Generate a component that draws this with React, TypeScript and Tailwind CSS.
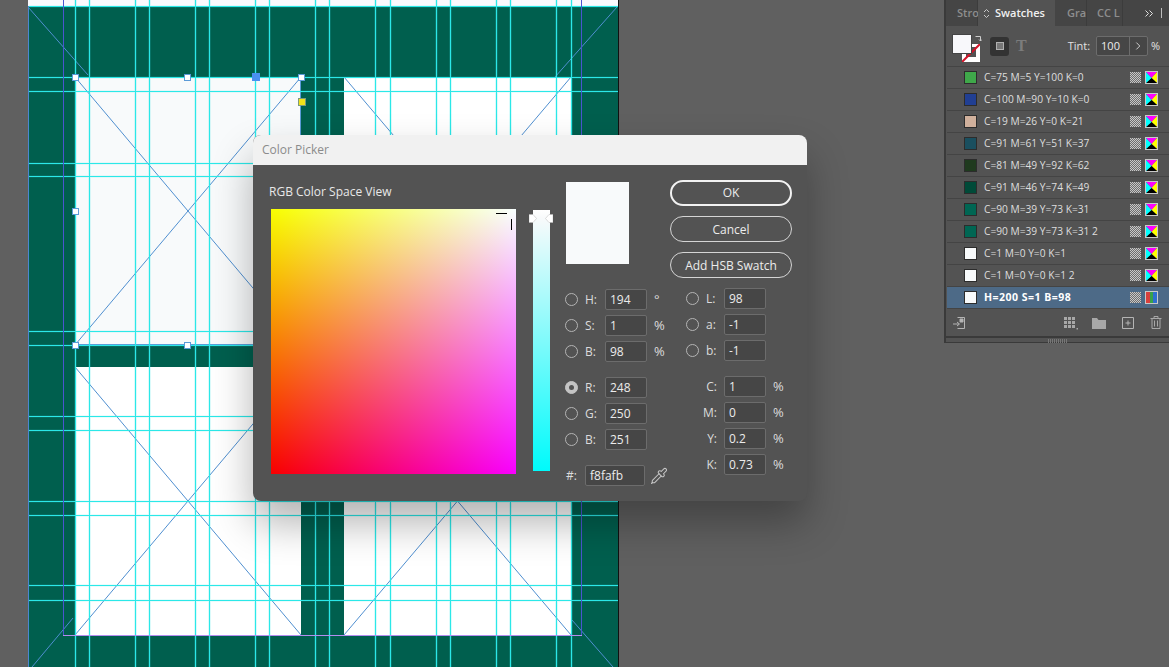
import { Pipette } from "lucide-react";

const verticals = [75, 89, 135, 149, 195, 209, 255, 269, 315, 329, 375, 390, 436, 450, 496, 510, 556, 571];
const horizontals = [6, 77, 91, 163, 176, 331, 345, 416, 430, 501, 515, 585, 600];

const frames = [
  { x1: 75, y1: 77, x2: 301, y2: 345 },
  { x1: 344, y1: 77, x2: 571, y2: 345 },
  { x1: 75, y1: 367, x2: 301, y2: 635 },
  { x1: 344, y1: 367, x2: 571, y2: 635 },
];

const swatches = [
  { name: "C=75 M=5 Y=100 K=0", color: "#3fa84a" },
  { name: "C=100 M=90 Y=10 K=0", color: "#213f93" },
  { name: "C=19 M=26 Y=0 K=21", color: "#d0b09c" },
  { name: "C=91 M=61 Y=51 K=37", color: "#1a4f5f" },
  { name: "C=81 M=49 Y=92 K=62", color: "#1f3a1e" },
  { name: "C=91 M=46 Y=74 K=49", color: "#004a38" },
  { name: "C=90 M=39 Y=73 K=31", color: "#006653" },
  { name: "C=90 M=39 Y=73 K=31 2", color: "#006653" },
  { name: "C=1 M=0 Y=0 K=1", color: "#f8fafb" },
  { name: "C=1 M=0 Y=0 K=1 2", color: "#f8fafb" },
  { name: "H=200 S=1 B=98", color: "#f8fafb", selected: true },
];

function Handle({ className }: { className: string }) {
  return <div className={`absolute h-[7px] w-[7px] border border-[#5b9bd8] bg-white ${className}`} />;
}

function Artboard() {
  return (
    <div className="absolute left-[28px] top-0 h-[667px] w-[591px] border-r border-r-[#111] bg-[#005f4e]">
      <div className="h-[6px] bg-[#fbf9fd]" />
      <div className="absolute left-[47px] top-[77px] h-[268px] w-[226px] border border-[#5b9bd8] bg-[#f8fafb]" />
      <div className="absolute left-[316px] top-[77px] h-[268px] w-[227px] bg-white" />
      <div className="absolute left-[47px] top-[367px] h-[268px] w-[226px] bg-white" />
      <div className="absolute left-[316px] top-[367px] h-[268px] w-[227px] bg-white" />
    </div>
  );
}

function ArtboardLines() {
  return (
    <svg className="absolute left-0 top-0" width="620" height="667">
      <line x1="28.5" y1="6" x2="28.5" y2="667" stroke="#4e86cf" />
      <g stroke="#4f8fd0" strokeWidth="1" fill="none">
        <line x1="28" y1="7" x2="88" y2="75" />
        <line x1="617" y1="7" x2="555" y2="77" />
        <line x1="73" y1="618" x2="32" y2="667" />
        <line x1="572" y1="620" x2="613" y2="667" />
        {frames.map((f) => (
          <g key={f.x1 + "-" + f.y1}>
            <line x1={f.x1} y1={f.y1} x2={f.x2} y2={f.y2} />
            <line x1={f.x2} y1={f.y1} x2={f.x1} y2={f.y2} />
          </g>
        ))}
      </g>
      <g stroke="#3fe3e6" strokeWidth="3" opacity="0.1">
        {verticals.map((x) => (
          <line key={x} x1={x + 0.5} y1="0" x2={x + 0.5} y2="667" />
        ))}
        {horizontals.map((y) => (
          <line key={y} x1="29" y1={y + 0.5} x2="618" y2={y + 0.5} />
        ))}
      </g>
      <g stroke="#2be8e8" strokeWidth="1.15">
        {verticals.map((x) => (
          <line key={x} x1={x + 0.5} y1="0" x2={x + 0.5} y2="667" />
        ))}
        {horizontals.map((y) => (
          <line key={y} x1="29" y1={y + 0.5} x2="618" y2={y + 0.5} />
        ))}
      </g>
      <g stroke="#4b55cf" strokeWidth="1" shapeRendering="crispEdges">
        <line x1="63.5" y1="0" x2="63.5" y2="635" />
        <line x1="581.5" y1="0" x2="581.5" y2="635" />
      </g>
      <line x1="63" y1="635.5" x2="582" y2="635.5" stroke="#b48df0" shapeRendering="crispEdges" />
    </svg>
  );
}

function Radio({ checked }: { checked?: boolean }) {
  return (
    <div
      className={`flex h-[13px] w-[13px] items-center justify-center rounded-full border ${
        checked ? "border-[#c4c4c4] bg-[#c4c4c4]" : "border-[#b4b4b4]"
      }`}
    >
      {checked && <div className="h-[5px] w-[5px] rounded-full bg-[#535353]" />}
    </div>
  );
}

function Input({ value, className = "w-[42px]" }: { value: string; className?: string }) {
  return (
    <div className={`flex h-[21px] items-center rounded-[2px] border border-[#6c6c6c] bg-[#464646] pl-[4px] text-[12px] text-[#ececec] ${className}`}>
      {value}
    </div>
  );
}

function Field({
  label,
  value,
  unit,
  checked,
  labelWidth = "w-[20px]",
}: {
  label: string;
  value: string;
  unit?: string;
  checked?: boolean;
  labelWidth?: string;
}) {
  return (
    <div className="flex h-[21px] items-center">
      <div className="w-[20px]">
        <Radio checked={checked} />
      </div>
      <div className={`${labelWidth} text-[12px] text-[#dcdcdc]`}>{label}</div>
      <Input value={value} />
      {unit && <div className="ml-[7px] text-[13px] text-[#dcdcdc]">{unit}</div>}
    </div>
  );
}

function CmykField({ label, value }: { label: string; value: string }) {
  return (
    <div className="flex h-[21px] items-center">
      <div className="w-[38px] pr-[7px] text-right text-[12px] text-[#dcdcdc]">{label}</div>
      <Input value={value} />
      <div className="ml-[7px] text-[13px] text-[#dcdcdc]">%</div>
    </div>
  );
}

function Marker({ flip }: { flip?: boolean }) {
  return (
    <svg width="8" height="9" viewBox="0 0 8 9" className={flip ? "-scale-x-100" : ""}>
      <path d="M0 0.5H4L7.5 4.5L4 8.5H0Z" fill="#fff" stroke="#bbb" strokeWidth="0.5" />
    </svg>
  );
}

function ColorPicker() {
  return (
    <div className="absolute left-[253px] top-[135px] h-[366px] w-[554px] overflow-hidden rounded-[8px] bg-[#535353] font-['Open_Sans',sans-serif] shadow-[0_22px_40px_rgba(0,0,0,0.3)]">
      <div className="flex h-[30px] items-center bg-[#f1f1f1] pl-[9px] text-[12px] text-[#8b8b8b]">Color Picker</div>
      <div className="flex pl-[16px]">
        <div className="w-[264px] pt-[18px]">
          <div className="h-[17px] text-[12px] leading-[17px] text-[#e8e8e8]">RGB Color Space View</div>
          <div className="relative ml-[2px] mt-[9px] h-[265px] w-[245px] bg-[linear-gradient(to_bottom,#0f0,#000),linear-gradient(to_right,#f80000,#f800ff)] bg-blend-screen">
            <div className="absolute right-[9px] top-[4px] h-px w-[11px] bg-black" />
            <div className="absolute right-[4px] top-[10px] h-[11px] w-px bg-black" />
          </div>
        </div>
        <div className="relative mt-[45px] h-[261px] w-[17px] bg-[linear-gradient(to_bottom,#fff_0%,#f8fafb_3%,#00fafb_100%)]">
          <div className="absolute -left-[4px] top-[4px] flex w-[24px] justify-between">
            <Marker />
            <Marker flip />
          </div>
        </div>
        <div className="ml-[16px] pt-[17px]">
          <div className="flex items-start">
            <div className="h-[82px] w-[63px] bg-[#f8fafb]" />
            <div className="ml-[41px] -mt-[2px] flex w-[122px] flex-col gap-[10px] text-[12px] text-[#ececec]">
              <div className="flex h-[26px] items-center justify-center rounded-full border-2 border-[#f2f2f2]">OK</div>
              <div className="flex h-[26px] items-center justify-center rounded-full border border-[#d4d4d4] pt-px">Cancel</div>
              <div className="flex h-[26px] items-center justify-center rounded-full border border-[#d4d4d4] pt-px">Add HSB Swatch</div>
            </div>
          </div>
          <div className="-ml-px mt-[11px] flex">
            <div className="w-[121px]">
              <div className="flex flex-col gap-[5px]">
                <Field label="H:" value="194" unit="°" />
                <Field label="S:" value="1" unit="%" />
                <Field label="B:" value="98" unit="%" />
              </div>
              <div className="mt-[15px] flex flex-col gap-[5px]">
                <Field label="R:" value="248" checked />
                <Field label="G:" value="250" />
                <Field label="B:" value="251" />
              </div>
              <div className="mt-[15px] flex h-[21px] items-center pl-[1px]">
                <div className="w-[19px] text-[12px] text-[#dcdcdc]">#:</div>
                <Input value="f8fafb" className="w-[60px]" />
                <Pipette size={18} strokeWidth={1.4} className="ml-[5px] text-[#c8c8c8]" />
              </div>
            </div>
            <div className="-mt-px">
              <div className="flex flex-col gap-[5px]">
                <Field label="L:" value="98" labelWidth="w-[18px]" />
                <Field label="a:" value="-1" labelWidth="w-[18px]" />
                <Field label="b:" value="-1" labelWidth="w-[18px]" />
              </div>
              <div className="mt-[15px] flex flex-col gap-[5px]">
                <CmykField label="C:" value="1" />
                <CmykField label="M:" value="0" />
                <CmykField label="Y:" value="0.2" />
                <CmykField label="K:" value="0.73" />
              </div>
            </div>
          </div>
        </div>
      </div>
    </div>
  );
}

function CmykIcon() {
  return (
    <svg width="11" height="11" viewBox="0 0 11 11" className="outline outline-1 outline-[#c8c8c8]">
      <path d="M0 0H11L5.5 6Z" fill="#f0f" />
      <path d="M11 0V11L5.5 6Z" fill="#ff0" />
      <path d="M0 11H11L5.5 6Z" fill="#000" />
      <path d="M0 0V11L5.5 6Z" fill="#0ff" />
    </svg>
  );
}

function SwatchRow({ name, color, selected }: { name: string; color: string; selected?: boolean }) {
  return (
    <div
      className={`flex h-[22px] items-center border-b border-[#444] pl-[17px] ${
        selected ? "bg-[#4d6a87] text-[10.5px] font-bold tracking-[0.5px] text-white" : "text-[10.2px] text-[#dedede]"
      }`}
    >
      <div className="h-[13px] w-[13px] border border-[#2c2c2c]" style={{ backgroundColor: color }} />
      <div className="ml-[7px] w-[146px] whitespace-nowrap">{name}</div>
      <div className="h-[11px] w-[11px] bg-[repeating-conic-gradient(#6e6e6e_0_25%,#c8c8c8_0_50%)] bg-[length:2px_2px]" />
      <div className="ml-[5px]">
        {selected ? (
          <div className="h-[11px] w-[11px] bg-[linear-gradient(to_right,#d8403c_33%,#3aa24a_33%_66%,#2f6fd0_66%)] outline outline-1 outline-[#c8c8c8]" />
        ) : (
          <CmykIcon />
        )}
      </div>
    </div>
  );
}

function SwatchesPanel() {
  return (
    <div className="absolute left-[944px] top-0 h-[343px] w-[225px] border-b border-l-2 border-[#3a3a3a] bg-[#535353] font-['Open_Sans',sans-serif]">
      <div className="flex h-[26px] items-center bg-[#454545] text-[11px] font-semibold">
        <div className="flex h-full w-[32px] items-center border-r border-[#3c3c3c] pl-[11px] text-[#8e8e8e]">Stro</div>
        <div className="flex h-full w-[77px] items-center bg-[#535353] pl-[5px] text-[#f0f0f0]">
          <svg width="7" height="11" viewBox="0 0 7 11" className="mr-[5px]" fill="none" stroke="#c8c8c8">
            <path d="M1 4L3.5 1.5L6 4M1 7L3.5 9.5L6 7" />
          </svg>
          Swatches
        </div>
        <div className="flex h-full w-[32px] items-center border-r border-[#3c3c3c] pl-[12px] text-[#8e8e8e]">Gra</div>
        <div className="flex h-full w-[36px] items-center whitespace-nowrap border-r border-[#3c3c3c] pl-[10px] text-[#8e8e8e]">CC L</div>
        <svg width="8" height="7" viewBox="0 0 8 7" className="ml-[22px]" fill="none" stroke="#e0e0e0">
          <path d="M0.5 0.5L3.5 3.5L0.5 6.5M4.5 0.5L7.5 3.5L4.5 6.5" />
        </svg>
        <div className="ml-[8px] h-[10px] w-px bg-[#bdbdbd]" />
      </div>
      <div className="flex h-[40px] items-center pl-[6px]">
        <div className="relative mt-[4px] h-[29px] w-[30px]">
          <div className="absolute left-[10px] top-[10px] h-[18px] w-[18px] overflow-hidden bg-white">
            <div className="absolute left-[4px] top-[3px] h-[10px] w-[10px] bg-[#535353]" />
            <div className="absolute left-[-4px] top-[8px] h-[2px] w-[26px] -rotate-45 bg-[#d2142a]" />
          </div>
          <div className="absolute left-0 top-0 h-[20px] w-[20px] border border-[#444] bg-[#f8f8fb]" />
          <svg width="7" height="7" viewBox="0 0 7 7" className="absolute left-[23px] top-[1px]" fill="none" stroke="#ccc">
            <path d="M0.5 1.5H5.5V6M4 4.5L5.5 6L7 4.5" />
          </svg>
        </div>
        <div className="ml-[8px] flex h-[19px] w-[19px] items-center justify-center rounded-[3px] bg-[#333]">
          <div className="h-[8px] w-[8px] border border-[#b0b0b0] bg-[#777]" />
        </div>
        <div className="ml-[7px] font-['Liberation_Serif',serif] text-[16px] font-bold text-[#7c7c7c]">T</div>
        <div className="ml-[41px] text-[11px] text-[#e2e2e2]">Tint:</div>
        <div className="ml-[6px] flex h-[20px] w-[52px] items-center rounded-[2px] border border-[#6c6c6c] bg-[#464646] text-[11px] text-[#ececec]">
          <div className="w-[34px] border-r border-[#6c6c6c] pl-[4px] leading-[18px]">100</div>
          <svg width="17" height="10" viewBox="0 0 17 10" fill="none" stroke="#d0d0d0">
            <path d="M6.5 1.5L10 5L6.5 8.5" />
          </svg>
        </div>
        <div className="ml-[3px] text-[11px] text-[#e2e2e2]">%</div>
      </div>
      <div className="ml-[1px] border-t border-[#444]">
        {swatches.map((s) => (
          <SwatchRow key={s.name} {...s} />
        ))}
      </div>
      <div className="flex h-[27px] items-center pl-[6px]">
        <svg width="14" height="14" viewBox="0 0 14 14" fill="none" stroke="#b4b4b4">
          <path d="M5.5 1.5H12.5V12.5H5.5M1 8H7M5 6L7.5 8L5 10" />
          <path d="M8 3H11V6H8Z" fill="#b4b4b4" />
        </svg>
        <svg width="14" height="14" viewBox="0 0 14 14" className="ml-[98px]" fill="#a8a8a8">
          <path d="M0 1H3V4H0ZM4 1H7V4H4ZM8 1H11V4H8ZM0 5H3V8H0ZM4 5H7V8H4ZM8 5H11V8H8ZM0 9H3V12H0ZM4 9H7V12H4ZM8 9H11V12H8ZM12.5 12H14V13.5H12.5Z" />
        </svg>
        <svg width="14" height="12" viewBox="0 0 14 12" className="ml-[14px]" fill="#a8a8a8">
          <path d="M0 1H5L6.5 3H14V12H0Z" />
        </svg>
        <svg width="12" height="12" viewBox="0 0 12 12" className="ml-[16px]" fill="none" stroke="#b4b4b4">
          <path d="M0.5 0.5H11.5V11.5H0.5ZM6 3.5V8.5M3.5 6H8.5" />
        </svg>
        <svg width="12" height="13" viewBox="0 0 12 13" className="ml-[16px]" fill="none" stroke="#a8a8a8">
          <path d="M0.5 2.5H11.5M4 2.5V0.5H8V2.5M2 2.5V12.5H10V2.5M4.5 4.5V10.5M7.5 4.5V10.5" />
        </svg>
      </div>
      <div className="flex h-[8px] justify-center border-t-2 border-[#3a3a3a] pt-[1px]">
        <div className="h-[4px] w-[19px] bg-[repeating-linear-gradient(to_right,#777_0_1px,transparent_1px_2px)]" />
      </div>
    </div>
  );
}

export default function App() {
  return (
    <div className="relative h-[667px] w-full overflow-hidden bg-[#606060]">
      <Artboard />
      <ArtboardLines />
      <Handle className="left-[72px] top-[74px]" />
      <Handle className="left-[184px] top-[74px]" />
      <Handle className="left-[298px] top-[74px]" />
      <Handle className="left-[72px] top-[208px]" />
      <Handle className="left-[72px] top-[342px]" />
      <Handle className="left-[184px] top-[342px]" />
      <div className="absolute left-[252px] top-[73px] h-[8px] w-[8px] bg-[#4a90f0]" />
      <div className="absolute left-[298px] top-[98px] h-[8px] w-[8px] border border-[#7d9a7d] bg-[#f2e21a]" />
      <SwatchesPanel />
      <ColorPicker />
    </div>
  );
}
